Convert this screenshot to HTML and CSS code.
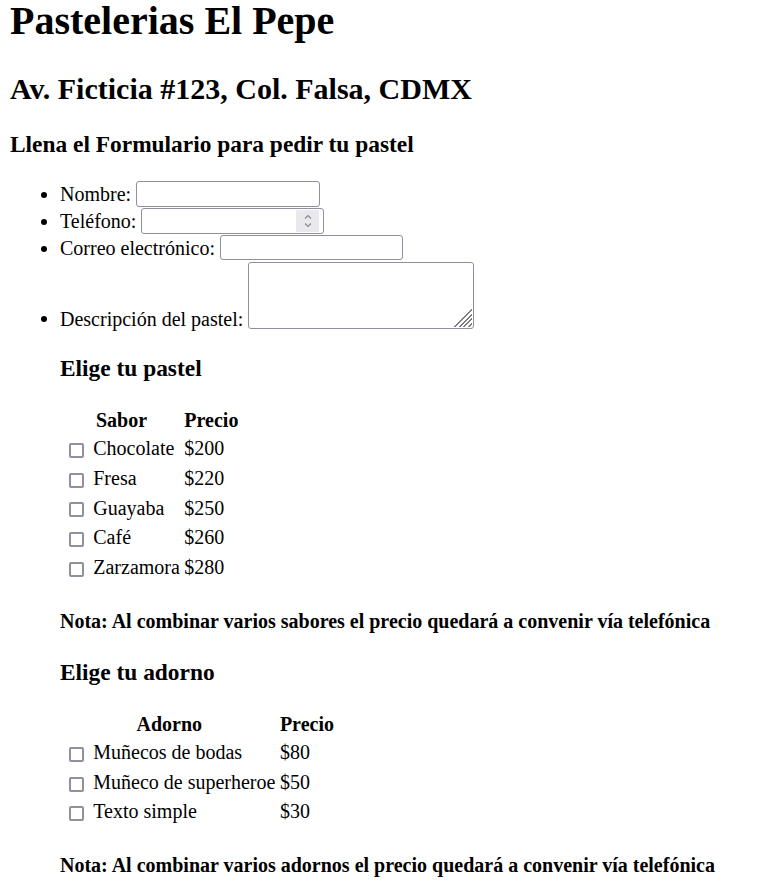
FILE: index.html
```html
<!DOCTYPE html>
<html lang="es">
<head>
<meta charset="utf-8">
<title>Pastelerias El Pepe</title>
<link rel="stylesheet" href="styles.css">
</head>
<body>
<h1 class="title">Pastelerias El Pepe</h1>
<h2 class="address">Av. Ficticia #123, Col. Falsa, CDMX</h2>
<h3 class="lead">Llena el Formulario para pedir tu pastel</h3>
<form class="order">
  <ul class="fields">
    <li>Nombre: <input class="field" type="text"></li>
    <li>Teléfono: <span class="numfield"><input class="numinput" type="text" inputmode="numeric"><span class="spin"><svg width="10" height="18" viewBox="0 0 10 18"><path d="M2 6.5 L5 3.5 L8 6.5" fill="none" stroke="#8a8a8a" stroke-width="1.2"/><path d="M2 11.5 L5 14.5 L8 11.5" fill="none" stroke="#8a8a8a" stroke-width="1.2"/></svg></span></span></li>
    <li>Correo electrónico: <input class="field" type="email"></li>
    <li>Descripción del pastel: <textarea class="desc"></textarea></li>
  </ul>
  <div class="section">
    <h3 class="sub">Elige tu pastel</h3>
    <table class="menu">
      <tr><th colspan="2">Sabor</th><th class="left">Precio</th></tr>
      <tr><td><input class="check" type="checkbox"></td><td>Chocolate</td><td>$200</td></tr>
      <tr><td><input class="check" type="checkbox"></td><td>Fresa</td><td>$220</td></tr>
      <tr><td><input class="check" type="checkbox"></td><td>Guayaba</td><td>$250</td></tr>
      <tr><td><input class="check" type="checkbox"></td><td>Café</td><td>$260</td></tr>
      <tr><td><input class="check" type="checkbox"></td><td>Zarzamora</td><td>$280</td></tr>
    </table>
    <h4 class="note">Nota: Al combinar varios sabores el precio quedará a convenir vía telefónica</h4>
    <h3 class="sub">Elige tu adorno</h3>
    <table class="menu">
      <tr><th colspan="2">Adorno</th><th class="left">Precio</th></tr>
      <tr><td><input class="check" type="checkbox"></td><td>Muñecos de bodas</td><td>$80</td></tr>
      <tr><td><input class="check" type="checkbox"></td><td>Muñeco de superheroe</td><td>$50</td></tr>
      <tr><td><input class="check" type="checkbox"></td><td>Texto simple</td><td>$30</td></tr>
    </table>
    <h4 class="note">Nota: Al combinar varios adornos el precio quedará a convenir vía telefónica</h4>
  </div>
</form>
</body>
</html>
```
FILE: styles.css
```css
html, body {
  font-family: "Liberation Serif", "Times New Roman", serif;
  font-size: 20px;
  color: #000;
  background: #fff;
}
body {
  margin: 0 10px 10px;
}
.title {
  font-size: 40px;
  line-height: 41px;
  margin: 0 0 31px;
}
.address {
  font-size: 30px;
  margin: 0 0 25px;
}
.lead {
  font-size: 23.4px;
  margin: 0 0 23.4px;
}
.fields {
  margin: 23.4px 0;
  padding-left: 50px;
}
.fields li {
  line-height: 26.7px;
}
.field {
  width: 183.5px;
  height: 25.5px;
  box-sizing: border-box;
  border: 1px solid #8f8f9d;
  border-radius: 3px;
  font-size: 16.67px;
  padding: 1px 3px;
  margin: 0;
  vertical-align: top;
  background: #fff;
}
.numfield {
  display: inline-flex;
  align-items: center;
  width: 183px;
  height: 26px;
  box-sizing: border-box;
  border: 1px solid #8f8f9d;
  border-radius: 3px;
  vertical-align: top;
  padding: 0 4px 0 3px;
}
.numinput {
  flex: 1;
  min-width: 0;
  border: none;
  outline: none;
  padding: 0;
  margin: 0;
  font-size: 16.67px;
  background: transparent;
}
.spin {
  display: flex;
  align-items: center;
  justify-content: center;
  width: 23px;
  height: 22px;
  background: #e9e9ed;
}
.spin svg {
  display: block;
}
.desc {
  width: 225.5px;
  height: 67.7px;
  box-sizing: border-box;
  border: 1px solid #8f8f9d;
  border-radius: 3px;
  margin: 0;
  vertical-align: text-bottom;
  resize: none;
  background-color: #fff;
  background-image: linear-gradient(to bottom right,
    transparent 0 52%,
    #7a7a7a 52% 57%,
    transparent 57% 64%,
    #7a7a7a 64% 69%,
    transparent 69% 76%,
    #7a7a7a 76% 81%,
    transparent 81% 88%,
    #7a7a7a 88% 93%,
    transparent 93% 100%);
  background-size: 19px 19px;
  background-position: right 1px bottom 1px;
  background-repeat: no-repeat;
}
.section {
  padding-left: 50px;
}
.sub {
  font-size: 23.4px;
  margin: 23.4px 0;
}
.menu {
  border-spacing: 2.5px;
}
.menu th {
  padding: 1.25px;
  line-height: 23px;
}
.menu th.left {
  text-align: left;
}
.menu td {
  padding: 1.25px;
  height: 25.05px;
  line-height: 23px;
  vertical-align: middle;
}
.check {
  appearance: none;
  -webkit-appearance: none;
  width: 15px;
  height: 15px;
  box-sizing: border-box;
  border: 2px solid #8f8f9d;
  border-radius: 2px;
  background: #fff;
  margin: 0 5px 0 5.5px;
  vertical-align: middle;
}
.note {
  font-size: 20px;
  margin: 26.6px 0;
}
```
